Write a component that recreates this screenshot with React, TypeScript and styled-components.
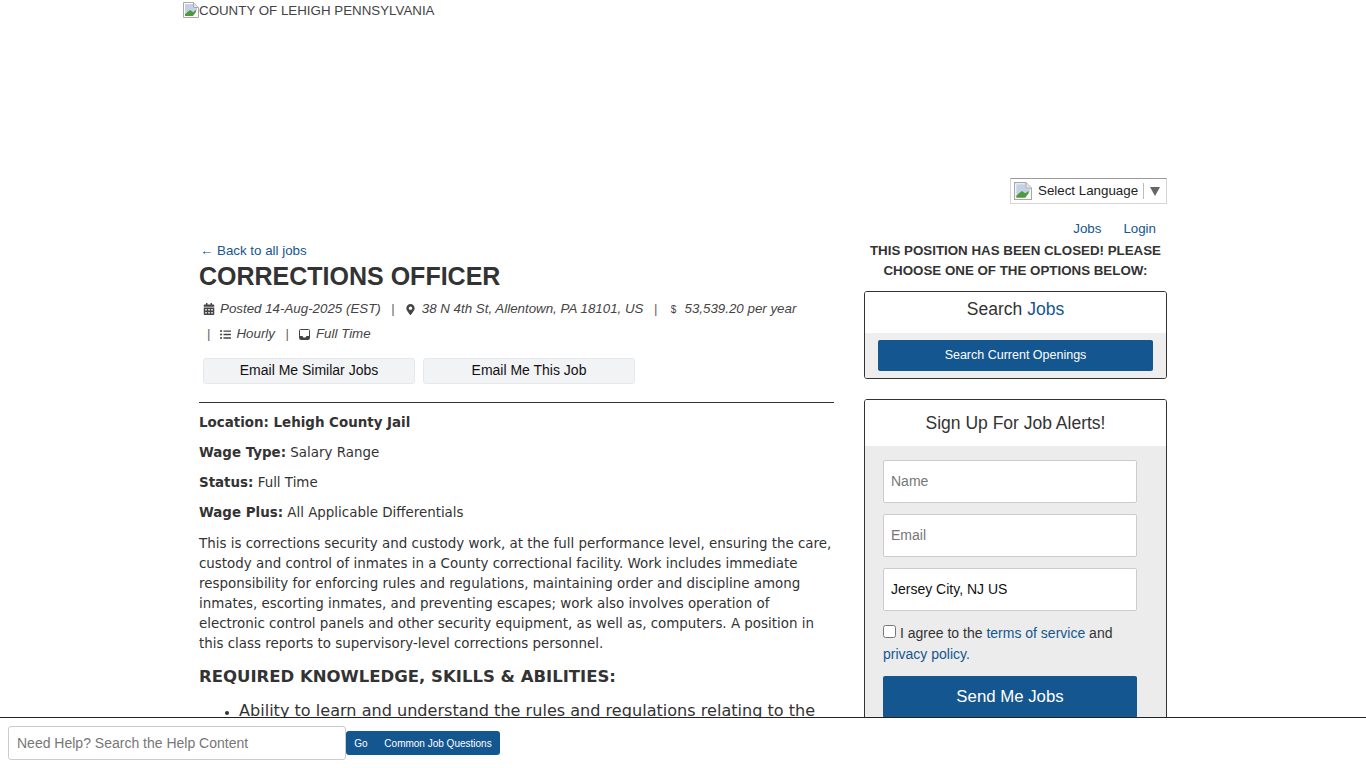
import * as React from 'react';
import styled, { createGlobalStyle } from 'styled-components';
import { FaCalendarAlt, FaMapMarkerAlt, FaListUl } from 'react-icons/fa';

const Global = createGlobalStyle`
  html, body { margin: 0; height: 768px; overflow: hidden; background: #fff; }
  body { font-family: "Liberation Sans", Arial, sans-serif; font-size: 13.33px; color: #333; }
  * { box-sizing: border-box; }
  a { color: #14568f; text-decoration: none; }
`;

const Page = styled.div`
  width: 1000px;
  margin-left: 183px;
`;

const Logo = styled.div`
  height: 178px;
  display: flex;
  align-items: flex-start;
  padding-top: 2px;
  line-height: 18px;
  color: #444;
`;

const LanguageRow = styled.div`
  height: 40px;
  width: 984px;
  display: flex;
  justify-content: flex-end;
`;

const LanguageBox = styled.div`
  width: 157px;
  height: 26px;
  border: 1px solid #d5d5d5;
  border-top-color: #9a9a9a;
  display: flex;
  align-items: center;
  padding-left: 3px;
  color: #222;
`;

const LanguageImage = styled.span`
  display: inline-flex;
  width: 18px;
  height: 18px;
  svg { width: 18px; height: 18px; }
`;

const LanguageLabel = styled.span`
  margin-left: 6px;
  padding-right: 5px;
  border-right: 1px solid #bbb;
  line-height: 16px;
`;

const Caret = styled.span`
  margin-left: 6px;
  width: 0;
  height: 0;
  border-left: 5px solid transparent;
  border-right: 5px solid transparent;
  border-top: 9px solid #666;
`;

const Columns = styled.div`
  display: grid;
  grid-template-columns: 635px 303px;
  column-gap: 30px;
  margin-left: 16px;
  width: 968px;
`;

const Main = styled.main`
  padding-top: 25px;
  min-width: 0;
`;

const BackLink = styled.a`
  display: block;
  margin-left: 1px;
  line-height: 16px;
`;

const Title = styled.h1`
  margin: 1px 0 0;
  font-size: 25px;
  line-height: 32px;
  font-weight: 700;
  color: #333;
`;

const Meta = styled.div`
  margin-top: 4px;
  padding-left: 4px;
  font-style: italic;
  color: #444;
`;

const MetaRow = styled.div`
  display: flex;
  align-items: center;
  height: 26px;
  line-height: 26px;
  & + & { height: 24px; margin-top: 0; }
`;

const MetaIcon = styled.span<{ $size?: number }>`
  display: inline-flex;
  justify-content: center;
  width: 12px;
  margin-right: 5px;
  color: #444;
  font-size: ${(p) => p.$size ?? 11}px;
`;

const DollarIcon = styled(MetaIcon)`
  font-style: normal;
  font-size: 10px;
  line-height: 12px;
  padding-top: 2px;
`;

const Pipe = styled.span`
  font-style: normal;
  margin: 0 10px 0 10.5px;
  color: #666;
`;

const FirstPipe = styled(Pipe)`
  margin: 0 9px 0 4px;
`;

const Actions = styled.div`
  display: flex;
  gap: 8px;
  margin: 12px 0 0 4px;
`;

const GhostButton = styled.button`
  width: 212px;
  height: 26px;
  padding: 0 0 2px;
  border: 1px solid #e6e9ec;
  border-radius: 3px;
  background: #f1f3f5;
  color: #111;
  font: 14px "Liberation Sans", Arial, sans-serif;
`;

const Rule = styled.hr`
  margin: 18px 0 0;
  border: 0;
  border-top: 1px solid #333;
`;

const Body = styled.div`
  font-family: "DejaVu Sans", Verdana, sans-serif;
  font-size: 13.41px;
  color: #333;
  padding-top: 10px;
`;

const Field = styled.p`
  margin: 0 0 10px;
  line-height: 20px;
`;

const Summary = styled.p`
  margin: 11px 0 0;
  line-height: 20px;
`;

const Heading = styled.h2`
  margin: 13px 0 0;
  font-size: 16.5px;
  line-height: 20px;
  font-weight: 700;
  color: #333;
`;

const Bullets = styled.ul`
  margin: 14px 0 0;
  padding-left: 40px;
  font-size: 16.08px;
  line-height: 20px;
  li::marker { font-size: 12px; }
`;

const Side = styled.aside`
  min-width: 0;
`;

const TopNav = styled.nav`
  display: flex;
  justify-content: flex-end;
  gap: 22px;
  padding: 1px 11px 0 0;
  height: 23px;
  line-height: 20px;
`;

const ClosedNotice = styled.p`
  margin: 0 0 10px;
  line-height: 20px;
  font-weight: 700;
  text-align: center;
  color: #333;
`;

const Card = styled.section`
  border: 1px solid #333;
  border-radius: 3px;
  margin-bottom: 20px;
  overflow: hidden;
`;

const CardTitle = styled.h3<{ $height: number; $lift?: number }>`
  margin: 0;
  height: ${(p) => p.$height}px;
  padding-bottom: ${(p) => p.$lift ?? 0}px;
  display: flex;
  align-items: center;
  justify-content: center;
  gap: 5px;
  font-size: 17.5px;
  font-weight: 400;
  color: #333;
  background: #fff;
`;

const SearchBody = styled.div`
  background: #eee;
  padding: 7px 13px;
`;

const SearchButton = styled.button`
  display: block;
  width: 100%;
  height: 31px;
  padding: 0 0 2px;
  border: 0;
  border-radius: 2px;
  background: #14568f;
  color: #fff;
  font: 12.5px "Liberation Sans", Arial, sans-serif;
`;

const AlertsBody = styled.div`
  background: #ececec;
  padding: 14px 18px 40px;
`;

const Input = styled.input`
  display: block;
  width: 254px;
  height: 43px;
  margin-bottom: 11px;
  padding: 0 7px 2px;
  border: 1px solid #ccc;
  border-radius: 2px;
  background: #fff;
  color: #111;
  font: 14px "Liberation Sans", Arial, sans-serif;
  &::placeholder { color: #777; opacity: 1; }
`;

const Agree = styled.div`
  font-size: 14px;
  line-height: 21px;
  color: #333;
  width: 254px;
  margin-top: 12px;
`;

const Check = styled.input`
  width: 13px;
  height: 13px;
  margin: 0 4px 0 0;
  vertical-align: 0;
`;

const SendButton = styled.button`
  display: block;
  width: 254px;
  height: 42px;
  margin-top: 11px;
  border: 0;
  border-radius: 2px;
  background: #14568f;
  color: #fff;
  font: 16.8px "Liberation Sans", Arial, sans-serif;
`;

const HelpBar = styled.footer`
  position: fixed;
  left: 0;
  right: 0;
  bottom: 0;
  height: 51px;
  background: #fff;
  border-top: 1px solid #222;
  display: flex;
  align-items: flex-start;
  padding: 8px 0 0 8px;
`;

const HelpInput = styled.input`
  width: 338px;
  height: 34px;
  padding: 0 8px;
  border: 1px solid #ccc;
  border-radius: 3px;
  color: #333;
  font: 14px "Liberation Sans", Arial, sans-serif;
  &::placeholder { color: #777; opacity: 1; }
`;

const HelpButton = styled.button<{ $side: 'left' | 'right'; $width: number }>`
  width: ${(p) => p.$width}px;
  height: 24px;
  margin-top: 5px;
  padding: 0;
  border: 0;
  border-radius: ${(p) => (p.$side === 'left' ? '3px 0 0 3px' : '0 3px 3px 0')};
  background: #14568f;
  color: #fff;
  font: 10px "Liberation Sans", Arial, sans-serif;
`;

const BrokenImage = () => (
  <svg width="16" height="16" viewBox="0 0 16 16" style={{ flex: 'none' }}>
    <path d="M.5.5h10l5 5v10H.5z" fill="#fff" stroke="#a8a8a8" />
    <path d="M10.5.5v5h5" fill="#e4e4e4" stroke="#a8a8a8" />
    <path d="M2 2h8v4h4v3L2 11z" fill="#c3d0e6" />
    <path d="M2 14v-2l5-4 3 2 3-2v2l-3 4z" fill="#4f9a3f" />
  </svg>
);

const InboxIcon = () => (
  <svg width="11" height="11" viewBox="0 0 11 11">
    <path d="M1.5.5h8a1 1 0 0 1 1 1v8a1 1 0 0 1-1 1h-8a1 1 0 0 1-1-1v-8a1 1 0 0 1 1-1z" fill="none" stroke="#444" />
    <path d="M1 7h2.5l1 1.5h2L7.5 7H10v3H1z" fill="#444" />
  </svg>
);

export default function App() {
  return (
    <Page>
      <Global />
      <Logo>
        <BrokenImage />
        COUNTY OF LEHIGH PENNSYLVANIA
      </Logo>
      <LanguageRow>
        <LanguageBox>
          <LanguageImage><BrokenImage /></LanguageImage>
          <LanguageLabel>Select Language</LanguageLabel>
          <Caret />
        </LanguageBox>
      </LanguageRow>
      <Columns>
        <Main>
          <BackLink href="#">← Back to all jobs</BackLink>
          <Title>CORRECTIONS OFFICER</Title>
          <Meta>
            <MetaRow>
              <MetaIcon $size={12}><FaCalendarAlt /></MetaIcon>
              Posted 14-Aug-2025 (EST)
              <Pipe>|</Pipe>
              <MetaIcon><FaMapMarkerAlt /></MetaIcon>
              38 N 4th St, Allentown, PA 18101, US
              <Pipe>|</Pipe>
              <DollarIcon>$</DollarIcon>
              53,539.20 per year
            </MetaRow>
            <MetaRow>
              <FirstPipe>|</FirstPipe>
              <MetaIcon><FaListUl /></MetaIcon>
              Hourly
              <Pipe>|</Pipe>
              <MetaIcon><InboxIcon /></MetaIcon>
              Full Time
            </MetaRow>
          </Meta>
          <Actions>
            <GhostButton>Email Me Similar Jobs</GhostButton>
            <GhostButton>Email Me This Job</GhostButton>
          </Actions>
          <Rule />
          <Body>
            <Field><b>Location: Lehigh County Jail</b></Field>
            <Field><b>Wage Type:</b> Salary Range</Field>
            <Field><b>Status:</b> Full Time</Field>
            <Field><b>Wage Plus:</b> All Applicable Differentials</Field>
            <Summary>
              This is corrections security and custody work, at the full performance level, ensuring the care, custody and control of inmates in a County correctional facility. Work includes immediate responsibility for enforcing rules and regulations, maintaining order and discipline among inmates, escorting inmates, and preventing escapes; work also involves operation of electronic control panels and other security equipment, as well as, computers. A position in this class reports to supervisory-level corrections personnel.
            </Summary>
            <Heading>REQUIRED KNOWLEDGE, SKILLS &amp; ABILITIES:</Heading>
            <Bullets>
              <li>Ability to learn and understand the rules and regulations relating to the</li>
            </Bullets>
          </Body>
        </Main>
        <Side>
          <TopNav>
            <a href="#">Jobs</a>
            <a href="#">Login</a>
          </TopNav>
          <ClosedNotice>THIS POSITION HAS BEEN CLOSED! PLEASE CHOOSE ONE OF THE OPTIONS BELOW:</ClosedNotice>
          <Card>
            <CardTitle $height={41} $lift={7}>Search <a href="#">Jobs</a></CardTitle>
            <SearchBody>
              <SearchButton>Search Current Openings</SearchButton>
            </SearchBody>
          </Card>
          <Card>
            <CardTitle $height={46}>Sign Up For Job Alerts!</CardTitle>
            <AlertsBody>
              <Input placeholder="Name" />
              <Input placeholder="Email" />
              <Input defaultValue="Jersey City, NJ US" />
              <Agree>
                <Check type="checkbox" />
                I agree to the <a href="#">terms of service</a> and <a href="#">privacy policy.</a>
              </Agree>
              <SendButton>Send Me Jobs</SendButton>
            </AlertsBody>
          </Card>
        </Side>
      </Columns>
      <HelpBar>
        <HelpInput placeholder="Need Help? Search the Help Content" />
        <HelpButton $side="left" $width={30}>Go</HelpButton>
        <HelpButton $side="right" $width={124}>Common Job Questions</HelpButton>
      </HelpBar>
    </Page>
  );
}
